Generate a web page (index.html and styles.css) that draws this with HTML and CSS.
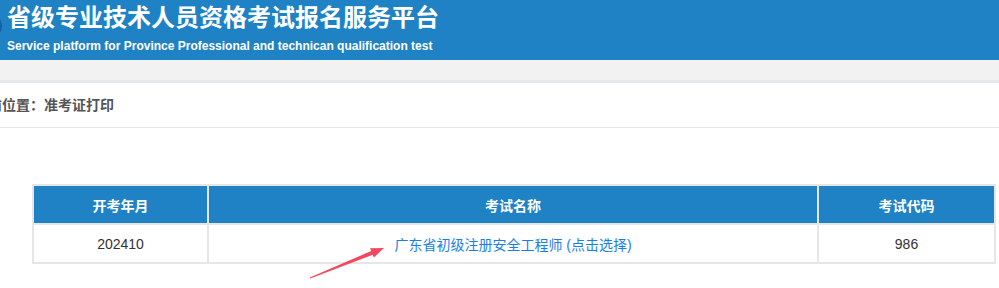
FILE: index.html
```html
<!DOCTYPE html>
<html>
  <head>
    <meta charset="UTF-8" />
    <title>准考证打印</title>
    <link rel="stylesheet" href="styles.css">
  </head>
  <body>
    <div id="header">
      <svg class="logo" width="26" height="26" viewBox="0 0 26 26">
        <circle cx="13" cy="13" r="12" fill="#1b5ea8" />
        <circle cx="13" cy="13" r="8" fill="#2a78c2" />
      </svg>
      <div class="brand">
        <div class="brand-cn">省级专业技术人员资格考试报名服务平台</div>
        <div class="brand-en">Service platform for Province Professional and technican qualification test</div>
      </div>
    </div>
    <div id="subnav"></div>
    <div class="crumb">当前位置：准考证打印</div>

    <div class="list">
      <table class="exam-table">
        <colgroup>
          <col class="col-date">
          <col>
          <col class="col-code">
        </colgroup>
        <thead>
          <tr>
            <th>开考年月</th>
            <th>考试名称</th>
            <th>考试代码</th>
          </tr>
        </thead>
        <tbody>
          <tr>
            <td>202410</td>
            <td><a href="#">广东省初级注册安全工程师 (点击选择)</a></td>
            <td>986</td>
          </tr>
        </tbody>
      </table>
      <!-- 提示箭头 -->
      <svg class="arrow" width="90" height="45" viewBox="0 0 90 45">
        <polygon points="9.8,39.45 71.25,13.05 70.1,10.3 84,10 73.9,19.5 72.75,16.75 10.2,40.55" fill="#f5475e" />
      </svg>
    </div>
  </body>
</html>
```

FILE: styles.css
```css
body {
    margin: 0;
    padding: 0;
    font-family: "Liberation Sans", "Noto Sans CJK SC", sans-serif;
    font-size: 14px;
    background-color: #fff;
    color: #333;
}

#header {
    height: 60px;
    background-color: #1e82c5;
    display: flex;
    align-items: flex-start;
    color: #fff;
    overflow: hidden;
}

.logo {
    margin: 13px 0 0 -23px;
    flex-shrink: 0;
}

.brand {
    padding: 2px 0 0 4px;
}

.brand-cn {
    font-size: 24px;
    font-weight: bold;
    line-height: 32px;
}

.brand-en {
    margin-top: 4px;
    font-size: 12px;
    font-weight: bold;
    line-height: 16px;
}

#subnav {
    height: 20px;
    background-color: #f2f2f2;
    border-bottom: 3px solid #e6e9ec;
}

.crumb {
    height: 44px;
    line-height: 44px;
    margin-left: -26px;
    font-size: 14px;
    font-weight: bold;
    color: #555;
    border-bottom: 1px solid #e6e9ec;
}

.list {
    position: relative;
    margin-top: 56px;
    padding: 0 0 22px 32px;
}

.exam-table {
    width: 964px;
    table-layout: fixed;
    border-collapse: collapse;
    border: 2px solid #e6e6e6;
}

.col-date {
    width: 175px;
}

.col-code {
    width: 177px;
}

.exam-table th,
.exam-table td {
    border: 2px solid #e6e6e6;
    text-align: center;
    height: 37px;
    padding: 0;
    font-size: 14px;
}

.exam-table th {
    background-color: #1e82c5;
    color: #fff;
    font-weight: bold;
}

.exam-table a {
    color: #1a7ee8;
    text-decoration: none;
}

.arrow {
    position: absolute;
    left: 300px;
    top: 54px;
}
```
